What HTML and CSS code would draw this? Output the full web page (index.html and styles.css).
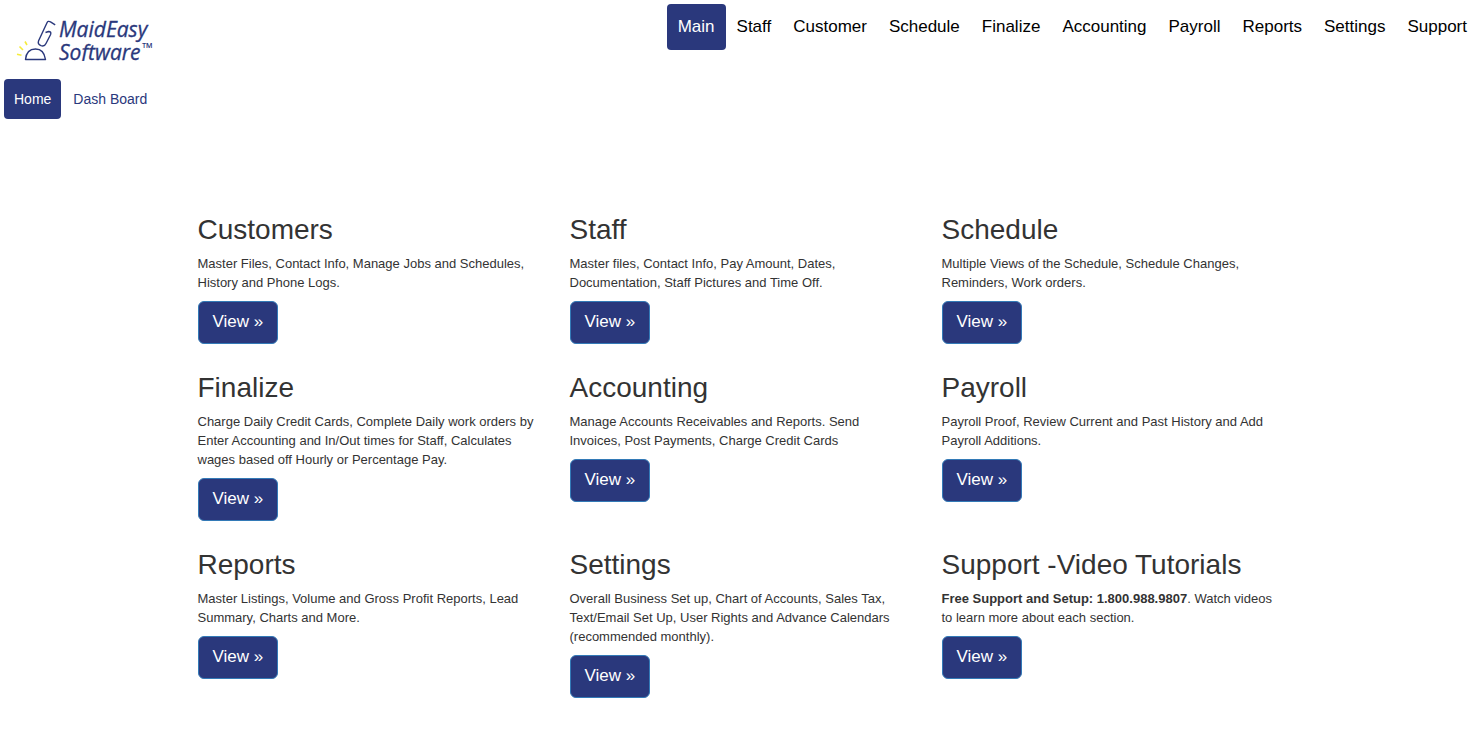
FILE: index.html
```html
<!DOCTYPE html>
<html lang="en">
<head>
    <meta charset="UTF-8">
    <meta name="viewport" content="width=device-width, initial-scale=1.0">
    <title>MaidEasy Software</title>
    <link rel="stylesheet" href="styles.css">
</head>
<body>
    <header class="top-bar">
        <a class="logo" href="#">
            <svg width="144" height="46" viewBox="0 0 144 46" role="img" aria-label="MaidEasy Software">
                <!-- bell and striker -->
                <path class="ink" d="M39.200 9.800 L34.500 6.800 Q32 5.600 31 7.800 L22.600 25.800 Q21.300 29.300 25 30.700 Q28.600 31.800 30 28.500 L34.600 19.500 Q35.600 16.500 32.600 16.500 L29.500 17.500"/>
                <path class="ink" d="M9.500 44.500 Q10.500 34 19.500 34 Q28 34 29.500 44.500 Z"/>
                <path class="spark" d="M9 26.500 L11 30 M3.500 31.500 L7 35 M1 39.200 L5.500 40.200"/>
                <text class="logo-text" x="43" y="22">MaidEasy</text>
                <text class="logo-text" x="43" y="45">Software</text>
                <text class="logo-mark" x="126" y="38">™</text>
            </svg>
        </a>
        <nav class="main-nav">
            <a class="active" href="#">Main</a>
            <a href="#">Staff</a>
            <a href="#">Customer</a>
            <a href="#">Schedule</a>
            <a href="#">Finalize</a>
            <a href="#">Accounting</a>
            <a href="#">Payroll</a>
            <a href="#">Reports</a>
            <a href="#">Settings</a>
            <a href="#">Support</a>
        </nav>
    </header>

    <nav class="sub-nav">
        <a class="active" href="#">Home</a>
        <a href="#">Dash Board</a>
    </nav>

    <main class="container">
        <section class="card">
            <h2>Customers</h2>
            <p>Master Files, Contact Info, Manage Jobs and Schedules, History and Phone Logs.</p>
            <a class="btn" href="#">View »</a>
        </section>
        <section class="card">
            <h2>Staff</h2>
            <p>Master files, Contact Info, Pay Amount, Dates, Documentation, Staff Pictures and Time Off.</p>
            <a class="btn" href="#">View »</a>
        </section>
        <section class="card">
            <h2>Schedule</h2>
            <p>Multiple Views of the Schedule, Schedule Changes, Reminders, Work orders.</p>
            <a class="btn" href="#">View »</a>
        </section>
        <section class="card">
            <h2>Finalize</h2>
            <p>Charge Daily Credit Cards, Complete Daily work orders by Enter Accounting and In/Out times for Staff, Calculates wages based off Hourly or Percentage Pay.</p>
            <a class="btn" href="#">View »</a>
        </section>
        <section class="card">
            <h2>Accounting</h2>
            <p>Manage Accounts Receivables and Reports. Send Invoices, Post Payments, Charge Credit Cards</p>
            <a class="btn" href="#">View »</a>
        </section>
        <section class="card">
            <h2>Payroll</h2>
            <p>Payroll Proof, Review Current and Past History and Add Payroll Additions.</p>
            <a class="btn" href="#">View »</a>
        </section>
        <section class="card">
            <h2>Reports</h2>
            <p>Master Listings, Volume and Gross Profit Reports, Lead Summary, Charts and More.</p>
            <a class="btn" href="#">View »</a>
        </section>
        <section class="card">
            <h2>Settings</h2>
            <p>Overall Business Set up, Chart of Accounts, Sales Tax, Text/Email Set Up, User Rights and Advance Calendars (recommended monthly).</p>
            <a class="btn" href="#">View »</a>
        </section>
        <section class="card">
            <h2>Support -Video Tutorials</h2>
            <p><strong>Free Support and Setup: 1.800.988.9807</strong>. Watch videos to learn more about each section.</p>
            <a class="btn" href="#">View »</a>
        </section>
    </main>
</body>
</html>
```

FILE: styles.css
```css
* {
    box-sizing: border-box;
}

body {
    margin: 0;
    font-family: "Liberation Sans", Arial, sans-serif;
    font-size: 13px;
    line-height: 19px;
    color: #333;
    background-color: #fff;
}

a {
    text-decoration: none;
}

/* Header */
.top-bar {
    display: flex;
    justify-content: space-between;
    align-items: flex-start;
    padding: 4px 3px 0 16px;
}

.logo {
    padding: 11px 0 4px;
}

.logo svg {
    display: block;
}

.ink {
    fill: none;
    stroke: #2a387c;
    stroke-width: 1.4;
    stroke-linejoin: round;
}

.spark {
    fill: none;
    stroke: #f5ec3c;
    stroke-width: 1.6;
}

.logo-text {
    font-family: "Open Sans", sans-serif;
    font-size: 21px;
    font-style: italic;
    fill: #2a387c;
    stroke: #2a387c;
    stroke-width: 0.3;
}

.logo-mark {
    font-family: "Open Sans", sans-serif;
    font-size: 14px;
    fill: #2a387c;
}

.main-nav {
    display: flex;
}

.main-nav a {
    padding: 11px;
    font-size: 17px;
    line-height: 24px;
    color: #000;
    border-radius: 4px;
}

.sub-nav {
    display: flex;
    gap: 2px;
    padding: 14px 4px 0;
}

.sub-nav a {
    padding: 10px;
    font-size: 14px;
    line-height: 20px;
    color: #2a387c;
    border-radius: 4px;
}

.main-nav .active,
.sub-nav .active {
    color: #fff;
    background-color: #2a387c;
}

/* Sections */
.container {
    display: grid;
    grid-template-columns: repeat(3, 1fr);
    gap: 28px 30px;
    max-width: 1116px;
    margin: 95px auto 44px;
    padding: 0 15px;
}

.card h2 {
    margin: 0 0 9px;
    font-size: 28px;
    font-weight: normal;
    line-height: 31px;
}

.card p {
    margin: 0 0 9px;
}

.btn {
    display: inline-block;
    padding: 8px 14px 10px;
    font-size: 17px;
    line-height: 23px;
    color: #fff;
    vertical-align: top;
    background-color: #2a387c;
    border: 1px solid #337ab7;
    border-radius: 6px;
}

.btn:hover {
    background-color: #1f2a60;
}
```
